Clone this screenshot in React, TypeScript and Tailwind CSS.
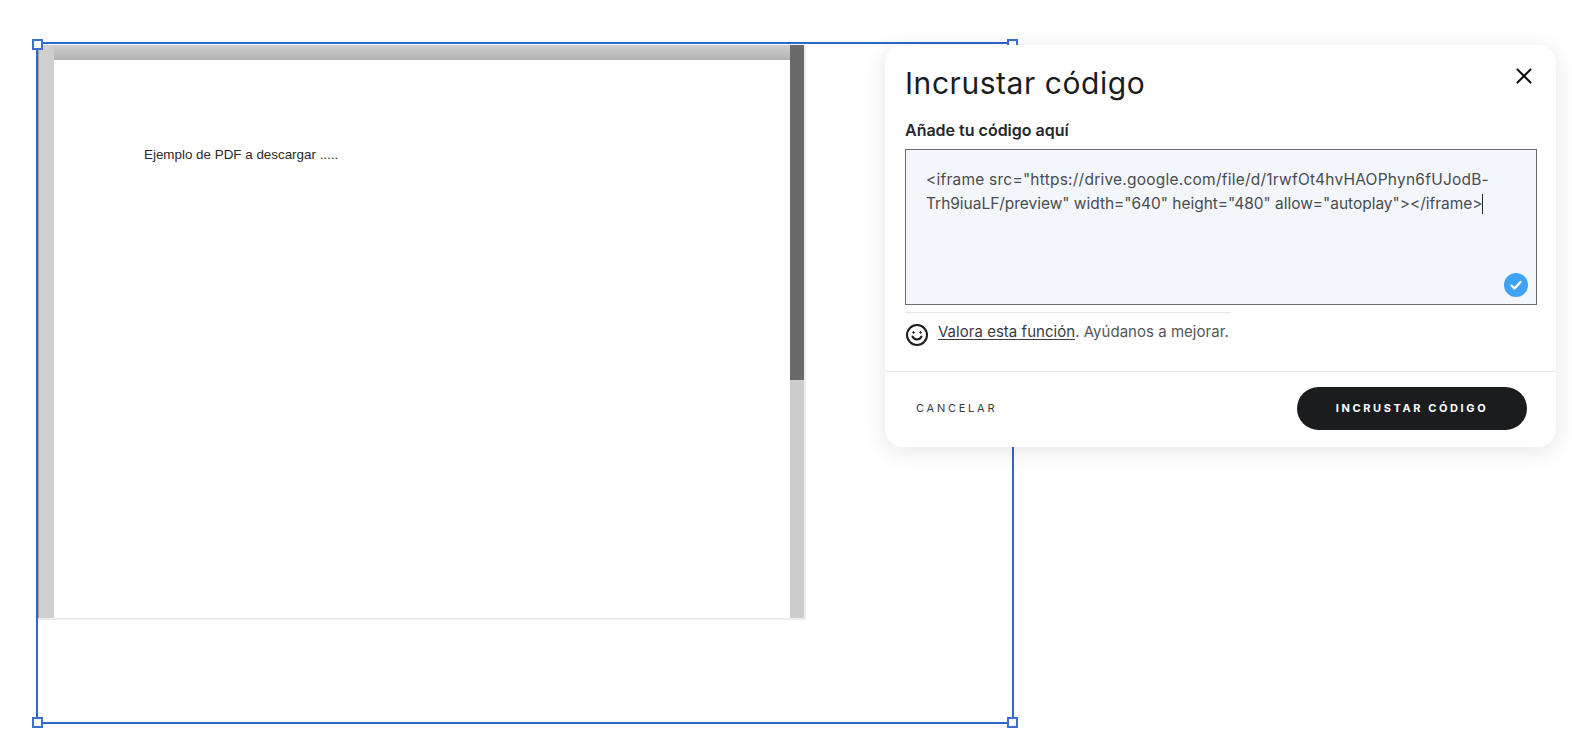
import { X } from "lucide-react";

const ui = "font-['Inter',sans-serif]";

function Handle({ className }: { className: string }) {
  return <span className={`absolute h-[11px] w-[11px] border-2 border-[#3a6fd8] bg-white ${className}`} />;
}

function PdfPreview() {
  return (
    <div className="mt-px flex h-[575px] w-[768px] flex-col border-r-2 border-b-2 border-[#ececec] bg-white">
      <div className="flex min-h-0 flex-1">
        <div className="w-[16px] shrink-0 border-l border-[#9c9c9c] bg-[#cfcfcf]" />
        <div className="flex min-w-0 flex-1 flex-col">
          <div className="h-[15px] bg-gradient-to-b from-[#cecece] to-[#b2b2b2]" />
          <div className="flex-1 pl-[90px] pt-[85px] font-['Liberation_Sans',sans-serif] text-[13.4px] leading-[20px] text-[#2a2a2a]">
            Ejemplo de PDF a descargar .....
          </div>
        </div>
        <div className="flex w-[14px] shrink-0 flex-col bg-[#cdcdcd]">
          <div className="h-[335px] bg-[#6a6a6a]" />
        </div>
      </div>
    </div>
  );
}

function EmbedDialog() {
  return (
    <div className={`absolute left-[885px] top-[45px] flex h-[402px] w-[671px] flex-col rounded-[18px] bg-white text-[#1b1c1e] shadow-[0_4px_24px_rgba(0,0,0,0.1)] ${ui}`}>
      <div className="flex items-start justify-between pl-[20px] pr-[19px] pt-[17px]">
        <h2 className="text-[30px] font-normal leading-[42px] tracking-[0.55px]">Incrustar código</h2>
        <button className="mt-px text-[#111]" aria-label="Cerrar">
          <X size={26} strokeWidth={1.8} />
        </button>
      </div>
      <div className="flex flex-1 flex-col pl-[20px] pr-[18px] pt-[14px]">
        <label className="text-[16px] font-semibold leading-[24px] text-[#26272a]">Añade tu código aquí</label>
        <div className="relative mt-[7px] h-[156px] w-[632px] border border-[#6b6b6b] bg-[#f3f6fa] pl-[20px] pr-[30px] pt-[18px] text-[15.5px] leading-[24px] text-[#4a4c50]">
          <div className="whitespace-nowrap tracking-[0.23px]">&lt;iframe src="https://drive.google.com/file/d/1rwfOt4hvHAOPhyn6fUJodB-</div>
          <div className="flex items-center whitespace-nowrap tracking-[-0.03px]">
            Trh9iuaLF/preview" width="640" height="480" allow="autoplay"&gt;&lt;/iframe&gt;
            <span className="h-[20px] w-px bg-[#222]" />
          </div>
          <span className="absolute bottom-[7px] right-[8px] flex h-[24px] w-[24px] items-center justify-center rounded-full bg-[#3fa3f5]">
            <svg width="14" height="14" viewBox="0 0 14 14" fill="none">
              <path d="M2.5 7.500l3 3 6-6.500" stroke="#fff" strokeWidth="2.400" strokeLinecap="round" strokeLinejoin="round" />
            </svg>
          </span>
        </div>
        <div className="mt-[7px] w-[326px] border-t border-[#e6e6e6]" />
        <div className="mt-[6px] flex w-[326px] items-start text-[15px] leading-[24px] text-[#55575b]">
          <svg className="mt-[4px] shrink-0" width="24" height="24" viewBox="0 0 24 24" fill="none" stroke="#1b1c1e" strokeWidth="2">
            <circle cx="12" cy="12" r="10" />
            <path d="M7.500 13.500c1 2 2.600 3 4.500 3s3.500-1 4.500-3" strokeLinecap="round" />
            <circle cx="8.500" cy="9.500" r="0.800" fill="#1b1c1e" strokeWidth="1" />
            <circle cx="15.500" cy="9.500" r="0.800" fill="#1b1c1e" strokeWidth="1" />
          </svg>
          <p className="ml-[9px] mt-px whitespace-nowrap tracking-[0.03px]">
            <span className="text-[#3a3b3f] underline underline-offset-2">Valora esta función</span>. Ayúdanos a mejorar.
          </p>
        </div>
      </div>
      <div className="flex h-[76px] items-start justify-between border-t border-[#e6e6e6] pl-[31px] pr-[29px] pt-[15px]">
        <button className="mt-[13px] text-[11px] font-normal leading-[16px] tracking-[2.75px] text-[#3a3b3f]">CANCELAR</button>
        <button className="flex h-[43px] w-[230px] items-center justify-center rounded-full bg-[#1b1c1e] text-[11px] font-bold tracking-[2.6px] text-white">
          INCRUSTAR CÓDIGO
        </button>
      </div>
    </div>
  );
}

export default function App() {
  return (
    <div className="relative h-[751px] w-[1572px] overflow-hidden bg-white pl-[36px] pt-[42px]">
      <div className="relative h-[682px] w-[978px] border-2 border-[#2f66c9]">
        <PdfPreview />
        <Handle className="-left-[6px] -top-[5px]" />
        <Handle className="-right-[6px] -top-[5px]" />
        <Handle className="-bottom-[6px] -left-[6px]" />
        <Handle className="-bottom-[6px] -right-[6px]" />
      </div>
      <EmbedDialog />
    </div>
  );
}
